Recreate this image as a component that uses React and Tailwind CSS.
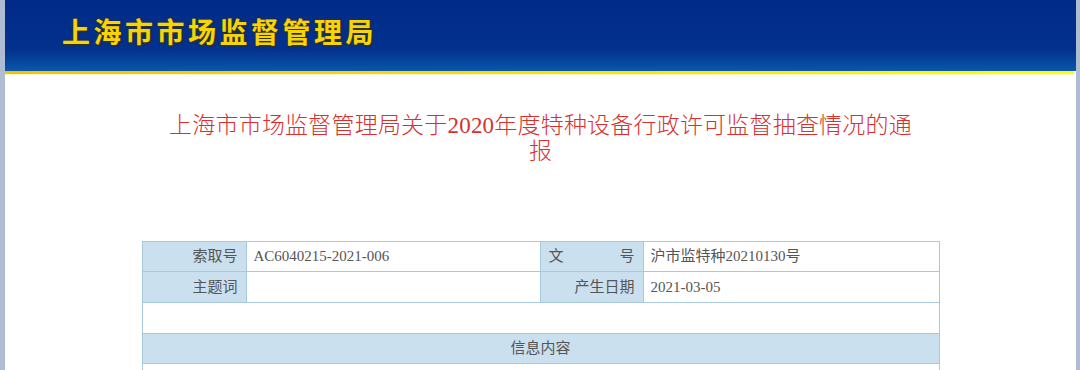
export default function App() {
  const serif = { fontFamily: '"Liberation Serif", "Noto Sans CJK SC", serif' };
  const label = "bg-[#cbe0ef] border border-[#a8c8dc] text-right pr-[8px] text-[15px] text-[#555] whitespace-nowrap";
  const val = "bg-white border border-[#a8c8dc] pl-[7px] text-[15px] text-[#555]";
  return (
    <div className="w-[1080px] h-[370px] overflow-hidden flex bg-white">
      <div className="w-[5px] shrink-0 bg-[#aebdd4]" />
      <div className="flex-1 flex flex-col">
        <div className="h-[71px] shrink-0 bg-gradient-to-b from-[#022b88] via-[#03318e] via-70% to-[#0b57a9] flex items-start">
          <div
            className="ml-[57px] mt-[13px] text-[28px] font-bold tracking-[3.5px] text-[#f6d40c] leading-[36px]"
            style={{ fontFamily: '"Noto Sans CJK SC", sans-serif', textShadow: '1px 1px 2px #3a3000, 0 0 2px #4a3a00' }}
          >
            上海市市场监督管理局
          </div>
        </div>
        <div className="h-[3px] shrink-0 mr-[2px] bg-gradient-to-r from-[#f5c100] to-[#ffff00]" />
        <div className="h-px shrink-0 bg-[#fff6c8] mr-[2px]" />
        <div
          className="shrink-0 mt-[38px] text-center text-[23px] tracking-[0.2px] leading-[26px] text-[#d8302e] font-light"
          style={serif}
        >
          上海市市场监督管理局关于2020年度特种设备行政许可监督抽查情况的通<br />报
        </div>
        <div className="shrink-0 flex justify-center mt-[76px]">
          <table className="w-[798px] border-collapse border border-[#a8c8dc]" style={serif}>
            <tbody>
              <tr className="h-[30px]">
                <td className={label + " w-[104px]"}>索取号</td>
                <td className={val + " w-[294px]"}>AC6040215-2021-006</td>
                <td className={label + " w-[103px] pl-[8px]"}>
                  <div className="flex justify-between"><span>文</span><span>号</span></div>
                </td>
                <td className={val}>沪市监特种20210130号</td>
              </tr>
              <tr className="h-[31px]">
                <td className={label}>主题词</td>
                <td className={val}></td>
                <td className={label}>产生日期</td>
                <td className={val}>2021-03-05</td>
              </tr>
              <tr className="h-[31px]">
                <td colSpan={4} className="bg-white border border-[#a8c8dc]"></td>
              </tr>
              <tr className="h-[30px]">
                <td colSpan={4} className="bg-[#cbe0ef] border border-[#a8c8dc] text-center text-[15px] text-[#555]">信息内容</td>
              </tr>
              <tr className="h-[40px]">
                <td colSpan={4} className="bg-white border border-[#a8c8dc]"></td>
              </tr>
            </tbody>
          </table>
        </div>
      </div>
      <div className="w-[4px] shrink-0 bg-[#aebdd4]" />
    </div>
  );
}
